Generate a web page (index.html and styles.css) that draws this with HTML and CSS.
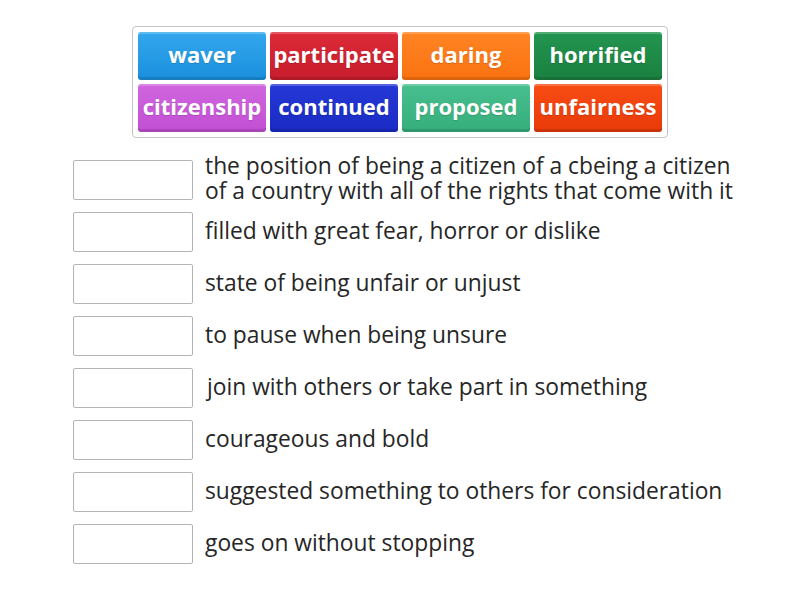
FILE: index.html
```html
<!DOCTYPE html>
<html>
<head>
<meta charset="utf-8">
<link rel="stylesheet" href="styles.css">
</head>
<body>
<div class="page">
  <div class="bank">
    <div class="tile blue">waver</div>
    <div class="tile red">participate</div>
    <div class="tile orange">daring</div>
    <div class="tile green">horrified</div>
    <div class="tile magenta">citizenship</div>
    <div class="tile navy">continued</div>
    <div class="tile teal">proposed</div>
    <div class="tile vermil">unfairness</div>
  </div>
  <div class="rows">
    <div class="row"><div class="box"></div><div class="def">the position of being a citizen of a cbeing a citizen of a country with all of the rights that come with it</div></div>
    <div class="row"><div class="box"></div><div class="def">filled with great fear, horror or dislike</div></div>
    <div class="row"><div class="box"></div><div class="def">state of being unfair or unjust</div></div>
    <div class="row"><div class="box"></div><div class="def">to pause when being unsure</div></div>
    <div class="row"><div class="box"></div><div class="def indent">join with others or take part in something</div></div>
    <div class="row"><div class="box"></div><div class="def">courageous and bold</div></div>
    <div class="row"><div class="box"></div><div class="def">suggested something to others for consideration</div></div>
    <div class="row"><div class="box"></div><div class="def">goes on without stopping</div></div>
  </div>
</div>
</body>
</html>
```
FILE: styles.css
```css
html, body {
  margin: 0;
  padding: 0;
  background: #ffffff;
}
body {
  font-family: "Open Sans", "Liberation Sans", sans-serif;
  width: 800px;
  height: 600px;
  overflow: hidden;
}
.page {
  padding-top: 26px;
}
.bank {
  width: 524px;
  margin: 0 auto;
  padding: 5px;
  border: 1px solid #c4c4c4;
  border-radius: 4px;
  display: grid;
  grid-template-columns: repeat(4, 128px);
  grid-auto-rows: 48px;
  gap: 4px;
}
.tile {
  border-radius: 3px;
  color: #fff;
  font-weight: 700;
  font-size: 22px;
  display: flex;
  align-items: center;
  justify-content: center;
  white-space: nowrap;
  box-shadow: inset 0 2px 0 rgba(255,255,255,0.22), inset 0 -3px 0 rgba(0,0,0,0.12);
  text-shadow: 0 1px 1px rgba(0,0,0,0.15);
  padding-bottom: 5px;
  box-sizing: border-box;
}
.blue { background: linear-gradient(#33a8ee, #1b8fdc); }
.red { background: linear-gradient(#dc2a38, #c81c2c); }
.orange { background: linear-gradient(#ff8424, #fa7210); }
.green { background: linear-gradient(#239550, #1a8040); }
.magenta { background: linear-gradient(#d066df, #c24fd3); }
.navy { background: linear-gradient(#2538d6, #1a2bc4); }
.teal { background: linear-gradient(#48bf8e, #36ae7c); }
.vermil { background: linear-gradient(#f84c14, #e83a08); }

.rows {
  padding-left: 73px;
  padding-top: 22px;
  display: flex;
  flex-direction: column;
  gap: 12px;
}
.row {
  display: flex;
  align-items: center;
  height: 40px;
}
.box {
  flex: none;
  width: 118px;
  height: 38px;
  border: 1px solid #b4b4b4;
  border-radius: 2px;
  background: #fff;
}
.def {
  margin-left: 12px;
  font-size: 22.8px;
  line-height: 25px;
  color: #262626;
  width: 540px;
  padding-bottom: 4px;
}
.indent {
  padding-left: 2px;
  width: 538px;
}
```
